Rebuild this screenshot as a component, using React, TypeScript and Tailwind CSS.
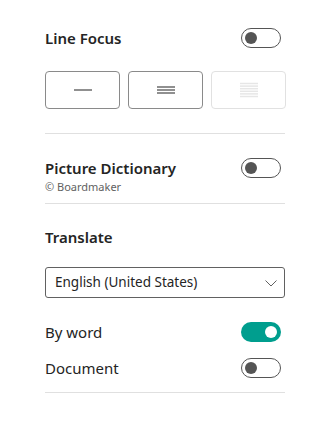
import React, { useState } from "react";

const Toggle = ({ on, onClick }: { on: boolean; onClick?: () => void }) => (
  <button
    onClick={onClick}
    className={
      on
        ? "w-[40px] h-[20px] mr-[4px] rounded-full bg-[#009e8e] flex items-center justify-end px-[4px] shrink-0"
        : "w-[40px] h-[20px] mr-[4px] rounded-full border border-[#555555] bg-white flex items-center justify-start px-[3px] shrink-0"
    }
  >
    <span
      className={
        on
          ? "w-[12px] h-[12px] rounded-full bg-white block"
          : "w-[12px] h-[12px] rounded-full bg-[#555555] block"
      }
    />
  </button>
);

const Lines = ({ count, color, gap }: { count: number; color: string; gap: number }) => (
  <svg width="20" height="16" viewBox="0 0 20 16">
    {Array.from({ length: count }).map((_, i) => {
      const total = (count - 1) * gap;
      const y = 8 - total / 2 + i * gap;
      return <line key={i} x1="1" x2="19" y1={y} y2={y} stroke={color} strokeWidth="1.5" />;
    })}
  </svg>
);

export default function App() {
  const [lineFocus, setLineFocus] = useState(false);
  const [picDict, setPicDict] = useState(false);
  const [byWord, setByWord] = useState(true);
  const [doc, setDoc] = useState(false);

  return (
    <div
      className="w-[332px] h-[422px] bg-white text-[#242424] px-[45px] pt-[28px]"
      style={{ fontFamily: '"Segoe UI", "Noto Sans", sans-serif' }}
    >
      <div className="flex items-center justify-between h-[20px] w-[240px]">
        <h2 className="text-[15px] font-semibold leading-none">Line Focus</h2>
        <Toggle on={lineFocus} onClick={() => setLineFocus(!lineFocus)} />
      </div>

      <div className="flex gap-[8px] mt-[23px] w-[241px]">
        <button className="w-[75px] h-[38px] rounded-[4px] border border-[#8a8a8a] flex items-center justify-center">
          <Lines count={1} color="#6b6b6b" gap={3} />
        </button>
        <button className="w-[75px] h-[38px] rounded-[4px] border border-[#8a8a8a] flex items-center justify-center">
          <Lines count={3} color="#6b6b6b" gap={3} />
        </button>
        <button className="w-[75px] h-[38px] rounded-[4px] border border-[#e1e1e1] flex items-center justify-center">
          <Lines count={6} color="#e6e6e6" gap={2.6} />
        </button>
      </div>

      <div className="h-px bg-[#e0e0e0] mt-[24px] w-[240px]" />

      <div className="flex items-center justify-between mt-[24px] h-[20px] w-[240px]">
        <h2 className="text-[15px] font-semibold leading-none">Picture Dictionary</h2>
        <Toggle on={picDict} onClick={() => setPicDict(!picDict)} />
      </div>
      <div className="text-[11px] text-[#616161] leading-none mt-[3px]">© Boardmaker</div>

      <div className="h-px bg-[#e0e0e0] mt-[11px] w-[240px]" />

      <h2 className="text-[15px] font-semibold leading-none mt-[26px]">Translate</h2>

      <button className="mt-[22px] w-[240px] h-[31px] rounded-[3px] border border-[#616161] flex items-center justify-between pl-[9px] pr-[5px]">
        <span className="text-[13.5px] leading-none">English (United States)</span>
        <svg width="16" height="16" viewBox="0 0 16 16">
          <path d="M2.5 5.5 L8 11 L13.5 5.5" fill="none" stroke="#616161" strokeWidth="1" />
        </svg>
      </button>

      <div className="flex items-center justify-between mt-[24px] h-[20px] w-[240px]">
        <span className="text-[15px] leading-none">By word</span>
        <Toggle on={byWord} onClick={() => setByWord(!byWord)} />
      </div>
      <div className="flex items-center justify-between mt-[16px] h-[20px] w-[240px]">
        <span className="text-[15px] leading-none">Document</span>
        <Toggle on={doc} onClick={() => setDoc(!doc)} />
      </div>

      <div className="h-px bg-[#e0e0e0] mt-[14px] w-[240px]" />
    </div>
  );
}
